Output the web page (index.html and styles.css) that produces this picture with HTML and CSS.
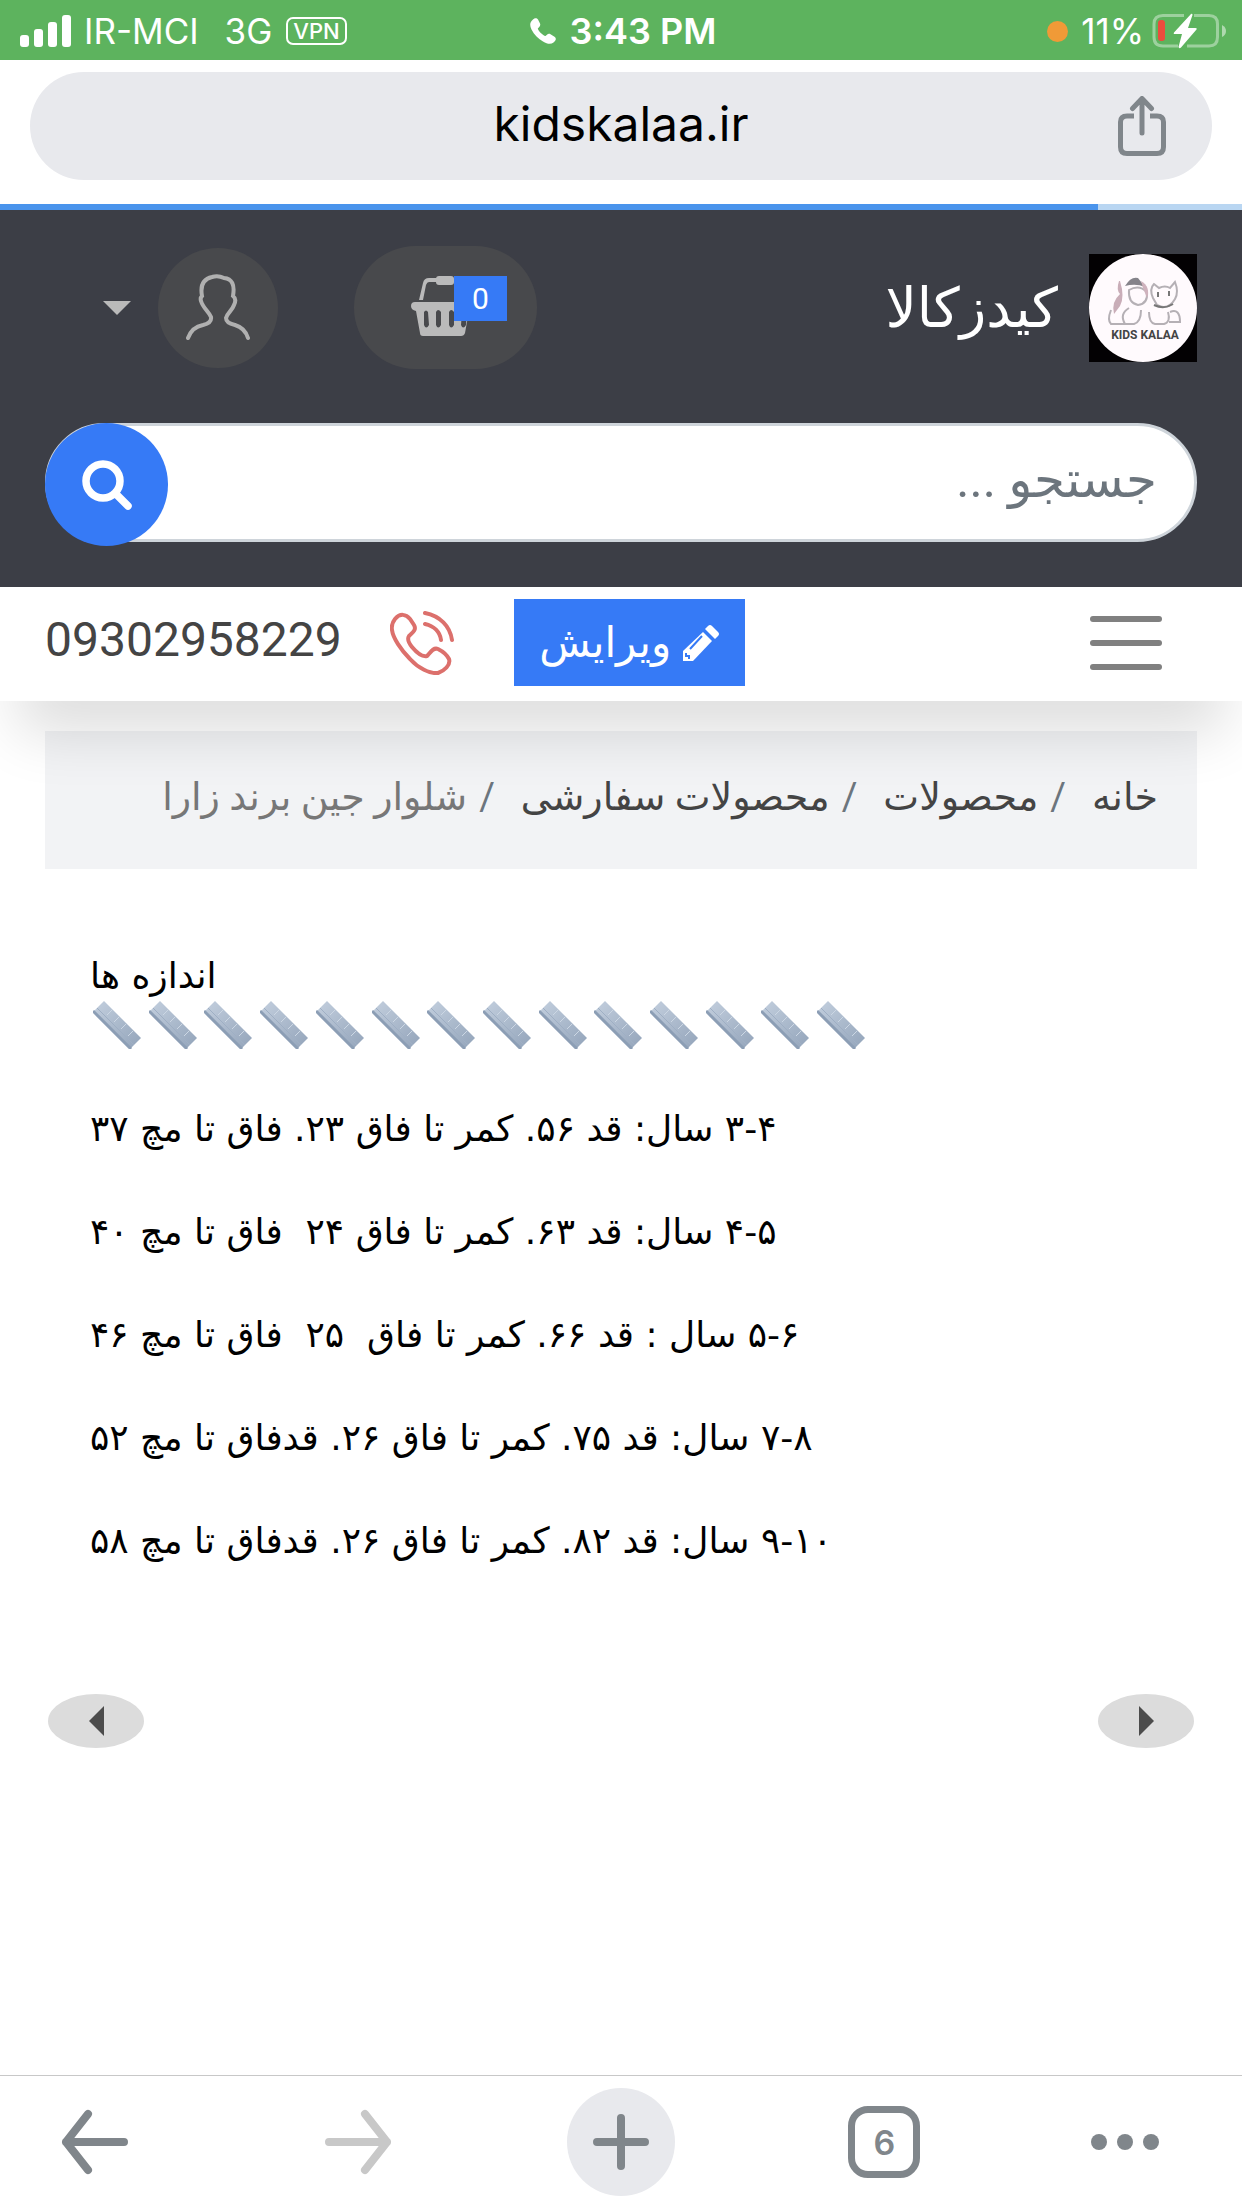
FILE: index.html
```html
<!DOCTYPE html>
<html lang="fa">
<head>
    <meta charset="UTF-8">
    <meta name="viewport" content="width=device-width, initial-scale=1">
    <title>کیدزکالا</title>
    <link rel="stylesheet" href="styles.css">
</head>
<body>
    <div class="status-bar">
        <div class="status-left">
            <svg class="signal" viewBox="0 0 52 32" fill="#fff">
                <rect x="0" y="20" width="9" height="12" rx="3"/>
                <rect x="14" y="14" width="9" height="18" rx="3"/>
                <rect x="28" y="7" width="9" height="25" rx="3"/>
                <rect x="42" y="0" width="9" height="32" rx="3"/>
            </svg>
            <span class="carrier">IR-MCI</span>
            <span class="network">3G</span>
            <span class="vpn">VPN</span>
        </div>
        <div class="status-time">
            <svg class="call" viewBox="0 0 26 26" fill="#fff">
                <path d="M3 1.500C5-.5 7 0 8 1.500L10 5.500C10.600 7 10.200 8 9 9.200L7.800 10.400C7.500 12 13.500 18.300 15.500 18L17 16.800C18 15.800 19 15.500 20.500 16.200L24.500 18.700C26 19.700 26.300 21.500 25 23L23.500 24.500C21 26.500 17.500 26.300 13 23.500C8.500 21 4 16.500 1.500 11.500C-.5 7.500-.3 4 3 1.500Z"/>
            </svg>
            <span>3:43 PM</span>
        </div>
        <div class="status-right">
            <span class="mic-dot"></span>
            <span>11%</span>
            <svg class="battery" viewBox="0 0 74 36">
                <g fill="none" stroke="#fff" stroke-opacity=".4" stroke-width="3">
                    <path d="M32 2.500H11Q2 2.500 2 11V24Q2 33 11 33H26"/>
                    <path d="M42 2.500H57Q65.500 2.500 65.500 11V24Q65.500 33 57 33H35"/>
                </g>
                <path d="M70 12Q74 14 74 18T70 24Z" fill="#fff" fill-opacity=".5"/>
                <rect x="6" y="7" width="7" height="21" rx="3" fill="#ea4d3d"/>
                <path d="M39 1 22 19.500Q21 21 23 21H30L26.500 34Q27 36 29 34.500L44.500 16.500Q45.500 15 43.500 15H36L40.500 2Q40.500 0 39 1Z" fill="#fff"/>
            </svg>
        </div>
    </div>

    <div class="address-bar">
        <div class="omnibox">
            <span class="url">kidskalaa.ir</span>
            <button class="share" type="button" aria-label="Share">
                <svg viewBox="0 0 48 60" fill="none" stroke="#80868b" stroke-width="5">
                    <path d="M16 20H9Q2.500 20 2.500 26V51Q2.500 57.500 9 57.500H39Q45.500 57.500 45.500 51V26Q45.500 20 39 20H32"/>
                    <path d="M24 37V3M14.500 12.500 24 2.500 33.500 12.500" stroke-linecap="round" stroke-linejoin="round"/>
                </svg>
            </button>
        </div>
    </div>
    <div class="loading"><div class="loading-value"></div></div>

    <div class="page" dir="rtl">
        <header class="site-header">
            <div class="header-row">
                <a class="brand" href="#">
                    <svg class="logo" viewBox="0 0 108 108">
                        <rect width="108" height="108" fill="#030103"/>
                        <circle cx="54" cy="54" r="54" fill="#fffafd"/>
                        <g fill="none" stroke="#b5b0b5" stroke-width="2">
                            <path d="M40 36Q39 49 49 51Q59 50 58 38Q50 30 40 36Z"/>
                            <path d="M22 56Q18 66 22 70H36M40 54Q30 60 36 70H45Q52 68 52 56"/>
                            <path d="M64 44Q60 35 65 30L70 34Q76 31 81 34L86 28Q90 38 86 45Q79 57 68 51Z"/>
                            <path d="M60 58Q60 69 66 70H75Q82 68 79 58M81 58Q91 54 91 68H80"/>
                        </g>
                        <path d="M69 38v5M80 37v5M65 51Q75 56 84 50" fill="none" stroke="#777" stroke-width="2"/>
                        <path d="M30 27Q27 36 31 40Q22 48 25 60L31 52Q36 43 31 27Z" fill="#c9adb8"/>
                        <path d="M36 32Q42 22 49 24L56 33Q47 29 36 32Z" fill="#85838a"/>
                        <path d="M52 27Q62 33 58 44L54 34Z" fill="#cfb2bd"/>
                        <text x="56" y="85" text-anchor="middle" class="logo-text">KIDS KALAA</text>
                    </svg>
                    <span class="brand-name">کیدزکالا</span>
                </a>
                <div class="header-tools">
                    <button class="basket" type="button" aria-label="سبد خرید">
                        <svg viewBox="0 0 62 62" fill="#bababa">
                            <path d="M8 25 12 8Q13 3 18 3H26V7H18Q16 7 15 10L12 25Z"/>
                            <rect x="25" y="1" width="18" height="9" rx="3"/>
                            <path d="M4 27H58Q62 27 62 31T58 36L54 58Q53 61 50 61H12Q9 61 9 58L5 36Q0 35 0 31T4 27ZM13 37V50Q15 55 18 50L17 37Q15 34 13 37ZM25 37V50Q27 55 30 50V37Q27 33 25 37ZM38 37V50Q40 55 43 50V37Q40 33 38 37ZM51 37 50 50Q52 55 55 50L56 37Q53 33 51 37Z" fill-rule="evenodd"/>
                        </svg>
                        <span class="basket-count">0</span>
                    </button>
                    <button class="account" type="button" aria-label="حساب کاربری">
                        <span class="avatar">
                            <svg viewBox="0 0 66 68" fill="none" stroke="#b0b0b0" stroke-width="4" stroke-linecap="round">
                                <path d="M3 64Q7 53 18 51Q27 49 26 43C24 38 18 34 16 27Q15 24 17 22Q14 6 27 3Q33 1 39 4Q51 5 48 22Q52 25 49 31C47 37 42 39 41 44Q41 49 50 51Q60 54 63 64"/>
                            </svg>
                        </span>
                        <span class="caret"></span>
                    </button>
                </div>
            </div>
            <form class="search">
                <input class="search-input" type="text" placeholder="جستجو ..." aria-label="جستجو">
                <button class="search-button" type="submit" aria-label="جستجو">
                    <svg viewBox="0 0 50 50" fill="none" stroke="#fff" stroke-width="7.500">
                        <circle cx="21" cy="21" r="17"/>
                        <path d="M34 34 46 46" stroke-linecap="round"/>
                    </svg>
                </button>
            </form>
        </header>

        <nav class="main-nav">
            <button class="menu" type="button" aria-label="منو">
                <span></span>
                <span></span>
                <span></span>
            </button>
            <button class="edit" type="button">
                <svg viewBox="0 0 36 36" fill="#fff">
                    <path d="M22 4 25 1Q27-1 29 1L35 7Q37 9 35 11L32 14Z"/>
                    <path d="M20 7 29 16 10 36H0V26Z"/>
                    <path d="M19 11 7 24M3 28V31H6V34" fill="none" stroke="#367af6" stroke-width="2"/>
                </svg>
                <span>ویرایش</span>
            </button>
            <a class="phone" href="tel:09302958229">
                <svg viewBox="0 0 64 64" fill="none" stroke="#dc706c" stroke-width="4" stroke-linecap="round">
                    <path d="M5 8C10 2 16 3 20 8L24 14C27 19 22 22 19 25C17 28 18 31 22 36C27 42 33 46 37 45C40 42 43 36 48 38C52 40 57 44 59 48C61 54 54 60 48 62C40 63 28 57 20 48C11 39 3 27 2 19Q1 13 5 8Z"/>
                    <path d="M35 2C50 5 60 15 62 29M35 13C44 15 50 21 51 29"/>
                </svg>
                <span class="phone-number">09302958229</span>
            </a>
        </nav>

        <main class="content">
            <nav aria-label="breadcrumb">
                <ol class="breadcrumb">
                    <li><a href="#">خانه</a></li>
                    <li><a href="#">محصولات</a></li>
                    <li><a href="#">محصولات سفارشی</a></li>
                    <li class="current">شلوار جین برند زارا</li>
                </ol>
            </nav>

            <section class="sizes">
                <h2>اندازه ها</h2>
                <svg width="0" height="0" class="defs">
                    <linearGradient id="steel" x1="0" y1="0" x2="1" y2="1">
                        <stop offset="0" stop-color="#c3cfde"/>
                        <stop offset="1" stop-color="#93a4ba"/>
                    </linearGradient>
                    <symbol id="ruler" viewBox="0 0 48 48">
                        <path d="M11 0 48 37 37 48 0 11Z" fill="url(#steel)"/>
                        <path d="M0 10 38 48" stroke="#8c9eb5" stroke-width="3"/>
                        <path d="M4 7 41 44" stroke="#9fafc4" stroke-width="1"/>
                        <path d="M19 9 14 14M26 16 21 21M33 23 28 28M40 30 35 35" stroke="#ccd7e4" stroke-width="1"/>
                    </symbol>
                </svg>
                <div class="rulers">
                    <svg><use href="#ruler"/></svg>
                    <svg><use href="#ruler"/></svg>
                    <svg><use href="#ruler"/></svg>
                    <svg><use href="#ruler"/></svg>
                    <svg><use href="#ruler"/></svg>
                    <svg><use href="#ruler"/></svg>
                    <svg><use href="#ruler"/></svg>
                    <svg><use href="#ruler"/></svg>
                    <svg><use href="#ruler"/></svg>
                    <svg><use href="#ruler"/></svg>
                    <svg><use href="#ruler"/></svg>
                    <svg><use href="#ruler"/></svg>
                    <svg><use href="#ruler"/></svg>
                    <svg><use href="#ruler"/></svg>
                </div>
                <p>۳-۴ سال: قد ۵۶. کمر تا فاق ۲۳. فاق تا مچ ۳۷</p>
                <p>۴-۵ سال: قد ۶۳. کمر تا فاق ۲۴&nbsp; فاق تا مچ ۴۰</p>
                <p>۵-۶ سال : قد ۶۶. کمر تا فاق&nbsp; ۲۵&nbsp; فاق تا مچ ۴۶</p>
                <p>۷-۸ سال: قد ۷۵. کمر تا فاق ۲۶. قدفاق تا مچ ۵۲</p>
                <p>۹-۱۰ سال: قد ۸۲. کمر تا فاق ۲۶. قدفاق تا مچ ۵۸</p>
            </section>

            <div class="slider-nav">
                <button type="button" aria-label="قبلی"><svg viewBox="0 0 15 30"><path d="M0 0 15 15 0 30Z"/></svg></button>
                <button type="button" aria-label="بعدی"><svg viewBox="0 0 15 30"><path d="M15 0 0 15 15 30Z"/></svg></button>
            </div>
        </main>
    </div>

    <div class="toolbar">
        <button class="back" type="button" aria-label="Back">
            <svg width="68" height="66" viewBox="0 0 68 66"><path d="M63 33H5M27 5 5 33 27 61"/></svg>
        </button>
        <button class="forward" type="button" aria-label="Forward" disabled>
            <svg width="68" height="66" viewBox="0 0 68 66"><path d="M5 33H63M41 5 63 33 41 61"/></svg>
        </button>
        <button class="new-tab" type="button" aria-label="New tab">
            <svg width="56" height="56" viewBox="0 0 56 56"><path d="M28 4V52M4 28H52"/></svg>
        </button>
        <button class="tabs" type="button" aria-label="Tabs">6</button>
        <button class="more" type="button" aria-label="More">
            <svg width="68" height="16" viewBox="0 0 68 16"><circle cx="8" cy="8" r="8"/><circle cx="34" cy="8" r="8"/><circle cx="60" cy="8" r="8"/></svg>
        </button>
    </div>
</body>
</html>
```

FILE: styles.css
```css
* {
    box-sizing: border-box;
}

body {
    margin: 0;
    min-height: 100vh;
    display: flex;
    flex-direction: column;
    font-family: Inter, sans-serif;
    background-color: #fff;
    color: #000;
}

button {
    border: none;
    padding: 0;
    background: none;
    font-family: inherit;
    cursor: pointer;
}

a {
    text-decoration: none;
    color: inherit;
}

svg {
    display: block;
}

/* status bar */
.status-bar {
    display: grid;
    grid-template-columns: 1fr auto 1fr;
    align-items: center;
    height: 60px;
    padding: 2px 16px 0 20px;
    background-color: #5db35e;
    color: #fff;
    font-size: 35px;
}

.status-left, .status-time, .status-right {
    display: flex;
    align-items: center;
}

.signal {
    width: 52px;
    height: 32px;
}

.carrier {
    margin-left: 12px;
}

.network {
    margin-left: 26px;
}

.vpn {
    margin-left: 14px;
    padding: 0 5px;
    border: 2px solid #fff;
    border-radius: 7px;
    font-size: 22px;
    line-height: 24px;
    font-weight: 500;
}

.status-time {
    gap: 14px;
    font-size: 36px;
    font-weight: 600;
}

.call {
    width: 26px;
    height: 26px;
}

.status-right {
    justify-content: flex-end;
}

.mic-dot {
    width: 21px;
    height: 21px;
    margin-right: 13px;
    border-radius: 50%;
    background-color: #f09a37;
}

.battery {
    width: 74px;
    height: 36px;
    margin-left: 8px;
}

/* address bar */
.address-bar {
    padding: 12px 30px 24px;
}

.omnibox {
    display: grid;
    grid-template-columns: 1fr auto 1fr;
    align-items: center;
    height: 108px;
    padding: 0 46px;
    border-radius: 54px;
    background-color: #e8e9ed;
}

.url {
    grid-column: 2;
    padding-bottom: 4px;
    font-size: 48px;
    line-height: 60px;
}

.share {
    justify-self: end;
}

.share svg {
    width: 48px;
    height: 60px;
}

.loading {
    height: 6px;
    background-color: #b9d6f2;
}

.loading-value {
    width: 88.4%;
    height: 100%;
    background-color: #4a94ec;
}

/* site */
.page {
    flex: 1;
    font-family: Roboto, "DejaVu Sans", sans-serif;
}

.site-header {
    padding: 36px 45px 41px;
    background-color: #3c3e46;
}

.header-row {
    display: flex;
    justify-content: space-between;
    align-items: center;
    margin-bottom: 54px;
}

.brand {
    display: flex;
    align-items: center;
    gap: 31px;
    color: #fff;
    font-size: 55px;
    line-height: 60px;
}

.logo {
    width: 108px;
    height: 108px;
}

.logo-text {
    font-size: 12px;
    font-weight: 700;
    fill: #444;
    direction: ltr;
}

.header-tools {
    display: flex;
    align-items: center;
    gap: 76px;
    padding-left: 58px;
}

.basket {
    position: relative;
    width: 183px;
    height: 123px;
    border-radius: 62px;
    background-color: #48494c;
}

.basket svg {
    width: 62px;
    height: 62px;
    margin: 0 64px 4px auto;
}

.basket-count {
    position: absolute;
    top: 30px;
    right: 30px;
    width: 53px;
    line-height: 45px;
    background-color: #367af6;
    color: #fff;
    font-size: 30px;
}

.account {
    display: flex;
    align-items: center;
    gap: 27px;
}

.avatar {
    display: flex;
    justify-content: center;
    align-items: center;
    width: 120px;
    height: 120px;
    border-radius: 50%;
    background-color: #48494c;
}

.avatar svg {
    width: 66px;
    height: 68px;
}

.caret {
    border: 14px solid transparent;
    border-top-color: #bababa;
    border-bottom: none;
}

.search {
    display: flex;
    position: relative;
    height: 123px;
}

.search-input {
    width: 100%;
    height: 119px;
    padding: 0 37px 6px 140px;
    border: 3px solid #ced4da;
    border-radius: 60px;
    background-color: #fff;
    font-family: inherit;
    font-size: 50px;
}

.search-input::placeholder {
    color: #6c757d;
    opacity: 1;
}

.search-button {
    position: absolute;
    left: 0;
    top: 0;
    width: 123px;
    height: 123px;
    border-radius: 50%;
    background-color: #367af6;
}

.search-button svg {
    width: 50px;
    height: 50px;
    margin: 0 auto;
}

.main-nav {
    position: relative;
    z-index: 1;
    display: flex;
    align-items: center;
    gap: 60px;
    padding: 12px 45px 15px;
    background-color: #fff;
    box-shadow: 0 48px 60px -18px rgba(0, 0, 0, 0.14);
}

.menu {
    display: flex;
    flex-direction: column;
    gap: 18px;
    width: 72px;
    margin: 0 35px 0 auto;
}

.menu span {
    height: 6px;
    border-radius: 3px;
    background-color: #808080;
}

.edit {
    display: flex;
    justify-content: center;
    align-items: center;
    gap: 12px;
    width: 231px;
    height: 87px;
    background-color: #367af6;
    color: #fff;
    font-size: 42px;
    line-height: 60px;
}

.edit svg {
    width: 36px;
    height: 36px;
}

.phone {
    display: flex;
    align-items: center;
    gap: 48px;
    color: #444;
    font-size: 48px;
}

.phone svg {
    width: 64px;
    height: 64px;
}

.phone-number {
    padding-bottom: 6px;
}

.content {
    padding: 30px 45px 0;
}

.breadcrumb {
    display: flex;
    margin: 0;
    padding: 33px 39px 39px;
    list-style: none;
    background-color: #f2f3f5;
    color: #444;
    font-size: 38px;
    line-height: 66px;
}

.breadcrumb li + li::before {
    content: "/";
    padding: 0 26px 0 12px;
    color: #6c757d;
}

.breadcrumb .current {
    color: #777;
}

.sizes {
    padding: 81px 45px 0;
    text-align: left;
    font-family: "DejaVu Sans", sans-serif;
    font-size: 36px;
}

.sizes h2 {
    margin: 0;
    font-size: inherit;
    font-weight: 400;
    line-height: 51px;
}

.sizes p {
    margin: 0;
    line-height: 103px;
}

.defs {
    position: absolute;
}

.rulers {
    display: flex;
    justify-content: space-between;
    max-width: 772px;
    margin: 0 auto 28px 3px;
}

.rulers svg {
    width: 48px;
    height: 48px;
}

.slider-nav {
    display: flex;
    justify-content: space-between;
    padding: 102px 3px 0;
}

.slider-nav button {
    width: 96px;
    height: 54px;
    border-radius: 50%;
    background-color: #dcdcdc;
}

.slider-nav svg {
    width: 15px;
    height: 30px;
    margin: 0 auto;
    fill: #4c4c4c;
}

/* bottom toolbar */
.toolbar {
    display: grid;
    grid-template-columns: 6fr 7fr 7fr 7fr 6fr;
    align-items: center;
    justify-items: center;
    height: 133px;
    border-top: 1px solid #c8c8c8;
    color: #80868b;
}

.toolbar path {
    fill: none;
    stroke: currentColor;
    stroke-width: 8px;
    stroke-linecap: round;
    stroke-linejoin: round;
}

.toolbar circle {
    fill: currentColor;
}

.back {
    justify-self: start;
    margin-left: 61px;
    color: inherit;
}

.forward {
    color: #c8c8c8;
}

.new-tab {
    display: flex;
    justify-content: center;
    align-items: center;
    width: 108px;
    height: 108px;
    border-radius: 50%;
    background-color: #e8e9ed;
    color: inherit;
}

.tabs {
    width: 72px;
    height: 72px;
    border: 7px solid #80868b;
    border-radius: 20px;
    color: inherit;
    font-size: 34px;
    font-weight: 600;
}

.more {
    justify-self: end;
    margin-right: 83px;
    color: inherit;
}
```
